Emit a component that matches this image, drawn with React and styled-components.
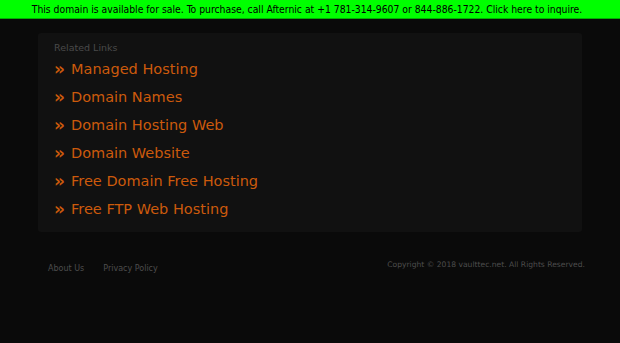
import React from 'react';
import styled, { createGlobalStyle } from 'styled-components';

const GlobalStyle = createGlobalStyle`
  html, body {
    margin: 0;
    padding: 0;
    background: #0a0a0a;
  }
  body {
    font-family: "DejaVu Sans", sans-serif;
  }
`;

const SaleBar = styled.div`
  height: 18px;
  padding-right: 6px;
  background: #00ff00;
  border-bottom: 1px solid #00b000;
  text-align: center;
  font-family: "DejaVu Sans Condensed", "DejaVu Sans", sans-serif;
  font-size: 10.3px;
  line-height: 18px;
  color: #000;
`;

const Page = styled.div`
  padding: 14px 38px 0;
`;

const Panel = styled.div`
  background: #111111;
  border-radius: 3px;
  padding: 9px 16px 10px;
  height: 199px;
  box-sizing: border-box;
`;

const Heading = styled.div`
  font-size: 9.5px;
  color: #4a4a4a;
  line-height: 12px;
  margin-bottom: 1px;
`;

const LinkList = styled.ul`
  list-style: none;
  margin: 0;
  padding: 0;
`;

const LinkItem = styled.li`
  display: flex;
  align-items: center;
  height: 28px;
  font-size: 14.5px;
  color: #cc5a0c;
`;

const Arrow = styled.span`
  width: 17px;
  font-size: 17px;
  font-weight: bold;
  line-height: 1;
  margin-top: 1px;
`;

const Footer = styled.div`
  display: flex;
  justify-content: space-between;
  align-items: flex-start;
  padding: 28px 35px 0 48px;
  font-size: 8px;
  color: #4d4d4d;
`;

const FooterLinks = styled.div`
  display: flex;
  gap: 19px;
  padding-top: 4px;
`;

const FooterLink = styled.span``;

const Copyright = styled.div`
  font-size: 7.6px;
`;

const links = [
  'Managed Hosting',
  'Domain Names',
  'Domain Hosting Web',
  'Domain Website',
  'Free Domain Free Hosting',
  'Free FTP Web Hosting',
];

export default function App() {
  return (
    <>
      <GlobalStyle />
      <SaleBar>
        This domain is available for sale. To purchase, call Afternic at +1 781-314-9607 or 844-886-1722. Click here to inquire.
      </SaleBar>
      <Page>
        <Panel>
          <Heading>Related Links</Heading>
          <LinkList>
            {links.map((l) => (
              <LinkItem key={l}>
                <Arrow>»</Arrow>
                {l}
              </LinkItem>
            ))}
          </LinkList>
        </Panel>
      </Page>
      <Footer>
        <FooterLinks>
          <FooterLink>About Us</FooterLink>
          <FooterLink>Privacy Policy</FooterLink>
        </FooterLinks>
        <Copyright>Copyright © 2018 vaulttec.net. All Rights Reserved.</Copyright>
      </Footer>
    </>
  );
}
